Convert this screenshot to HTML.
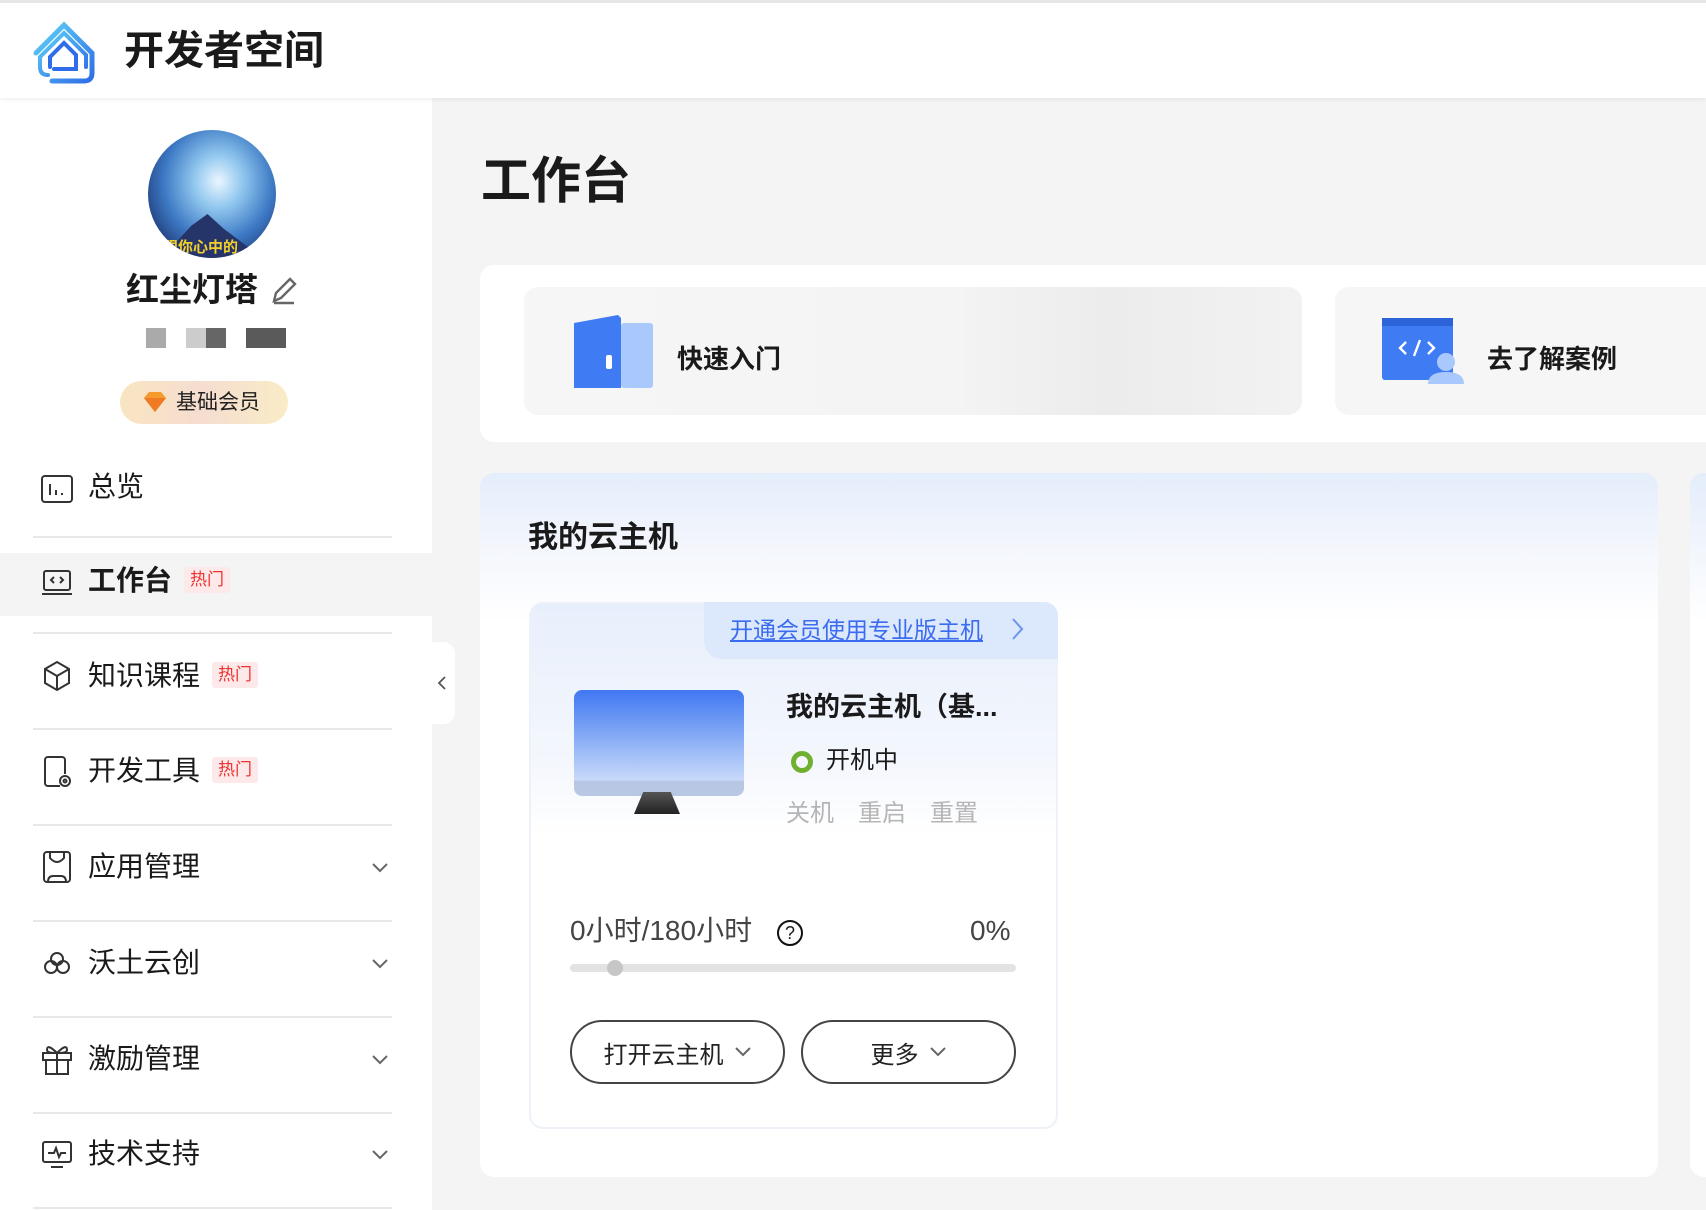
<!DOCTYPE html>
<html><head><meta charset="utf-8"><style>
*{margin:0;padding:0;box-sizing:border-box}
body{width:1706px;height:1210px;overflow:hidden;background:#f4f4f4;font-family:"Liberation Sans","Noto Sans CJK SC",sans-serif;color:#1a1a1a;position:relative}
.abs{position:absolute}
.hdr{left:0;top:0;width:1706px;height:98px;background:#fff;border-top:3px solid #e6e6e6;box-shadow:0 2px 4px rgba(0,0,0,.06);z-index:2}
.side{left:0;top:98px;width:432px;height:1112px;background:#fff}
.mi{position:absolute;left:88px;font-size:28px;line-height:40px;color:#1a1a1a}
.hot{display:inline-block;font-size:17px;line-height:26px;padding:0 6px;background:#fde9e9;color:#e33;border-radius:3px;vertical-align:middle;margin-left:12px;position:relative;top:-3px;font-weight:normal}
.ln{position:absolute;left:33px;width:359px;height:2px;background:#e8e8e8}
.ic{position:absolute;left:40px;width:34px;height:34px}
.chev{position:absolute;left:370px;width:20px;height:20px}
.btn{position:absolute;top:1020px;height:64px;border:2px solid #444;border-radius:32px;font-size:24px;display:flex;align-items:center;justify-content:center;gap:10px;color:#222}
</style></head><body>
<div class="abs hdr">
<svg class="abs" style="left:30px;top:14px" width="72" height="70" viewBox="0 0 72 70" fill="none">
<defs><linearGradient id="lg" x1="0" y1="0" x2="1" y2="1"><stop offset="0" stop-color="#5fd4f5"/><stop offset="1" stop-color="#2f6ee8"/></linearGradient></defs>
<path d="M6 36 L34 8 L62 36 L62 56 Q62 64 54 64 L22 64" stroke="url(#lg)" stroke-width="5" stroke-linecap="round"/>
<path d="M18 58 Q10 58 10 50 L10 40 L34 16 L56 38 L56 50" stroke="url(#lg)" stroke-width="4" stroke-linecap="round"/>
<path d="M20 50 L20 40 L34 26 L46 38 L46 52 L24 52" stroke="#2f6ee8" stroke-width="4" stroke-linecap="round"/>
</svg>
<div class="abs" style="left:124px;top:22px;font-size:40px;font-weight:bold;line-height:52px">开发者空间</div>
</div>
<div class="abs side"></div>
<div class="abs" style="left:148px;top:130px;width:128px;height:128px;border-radius:50%;background:radial-gradient(ellipse at 55% 40%,#eaf6ff 0%,#8fc6ee 25%,#3d79c4 55%,#1b2f6b 85%);overflow:hidden">
<div class="abs" style="left:10px;top:72px;width:110px;height:60px;background:#25356a;clip-path:polygon(0 100%,30% 40%,45% 20%,60% 45%,100% 100%)"></div>
<div class="abs" style="left:15px;top:106px;font-size:15px;font-weight:bold;color:#f2cf2a">跟你心中的</div>
</div>
<div class="abs" style="left:126px;top:268px;font-size:33px;font-weight:bold;line-height:44px">红尘灯塔</div>
<svg class="abs" style="left:270px;top:275px" width="28" height="30" viewBox="0 0 28 30"><path d="M4 26 L6 18 L20 4 L25 9 L11 23 Z M4 28 L24 28" stroke="#666" stroke-width="2.4" fill="none"/></svg>
<div class="abs" style="left:146px;top:328px;width:20px;height:20px;background:#aaa"></div>
<div class="abs" style="left:186px;top:328px;width:20px;height:20px;background:#ccc"></div>
<div class="abs" style="left:206px;top:328px;width:20px;height:20px;background:#666"></div>
<div class="abs" style="left:246px;top:328px;width:40px;height:20px;background:#5a5a5a"></div>
<div class="abs" style="left:120px;top:381px;width:168px;height:43px;border-radius:22px;background:linear-gradient(90deg,#f8e5c2,#f6ddd0,#f9ecc6)"></div>
<svg class="abs" style="left:142px;top:390px" width="26" height="24" viewBox="0 0 26 24"><path d="M2 8 L7 2 L19 2 L24 8 L13 22 Z" fill="#f59a2c"/><path d="M2 8 L24 8 L13 22Z" fill="#f07a22"/></svg>
<div class="abs" style="left:176px;top:388px;font-size:21px;line-height:30px;color:#222">基础会员</div>

<div class="abs" style="left:0;top:553px;width:432px;height:63px;background:#f4f4f4"></div>
<svg class="ic" style="top:472px" viewBox="0 0 34 34" fill="none" stroke="#333" stroke-width="2"><rect x="2" y="4" width="30" height="26" rx="3"/><path d="M10 12v11M16 18v5M22 21v2"/></svg>
<div class="mi" style="top:467px">总览</div>
<div class="ln" style="top:536px"></div>
<svg class="ic" style="top:566px" viewBox="0 0 34 34" fill="none" stroke="#333" stroke-width="2"><rect x="4" y="5" width="26" height="19" rx="2"/><path d="M2 28h30M14 11l-3 3 3 3M20 11l3 3-3 3"/></svg>
<div class="mi" style="top:561px;font-weight:bold">工作台<span class="hot">热门</span></div>
<div class="ln" style="top:632px"></div>
<svg class="ic" style="top:659px" viewBox="0 0 34 34" fill="none" stroke="#333" stroke-width="2"><path d="M17 3 L29 10 L29 24 L17 31 L5 24 L5 10Z M5 10 L17 17 L29 10 M17 17 V31"/></svg>
<div class="mi" style="top:656px">知识课程<span class="hot">热门</span></div>
<div class="ln" style="top:728px"></div>
<svg class="ic" style="top:755px" viewBox="0 0 34 34" fill="none" stroke="#333" stroke-width="2"><path d="M20 31H8a3 3 0 0 1-3-3V5a3 3 0 0 1 3-3h14a3 3 0 0 1 3 3v14"/><circle cx="25" cy="26" r="5"/><circle cx="25" cy="26" r="1.5"/></svg>
<div class="mi" style="top:751px">开发工具<span class="hot">热门</span></div>
<div class="ln" style="top:824px"></div>
<svg class="ic" style="top:850px" viewBox="0 0 34 34" fill="none" stroke="#333" stroke-width="2"><rect x="4" y="2" width="26" height="30" rx="3"/><path d="M10 2v6q7 8 14 0V2M8 32q0-6 5-6h8q5 0 5 6"/></svg>
<div class="mi" style="top:847px">应用管理</div>
<svg class="chev" style="top:857px" viewBox="0 0 20 20" fill="none" stroke="#666" stroke-width="2"><path d="M3 7l7 7 7-7"/></svg>
<div class="ln" style="top:920px"></div>
<svg class="ic" style="top:946px" viewBox="0 0 34 34" fill="none" stroke="#333" stroke-width="2"><circle cx="17" cy="13" r="6"/><circle cx="11" cy="21" r="6"/><circle cx="23" cy="21" r="6"/></svg>
<div class="mi" style="top:943px">沃土云创</div>
<svg class="chev" style="top:953px" viewBox="0 0 20 20" fill="none" stroke="#666" stroke-width="2"><path d="M3 7l7 7 7-7"/></svg>
<div class="ln" style="top:1016px"></div>
<svg class="ic" style="top:1042px" viewBox="0 0 34 34" fill="none" stroke="#333" stroke-width="2"><rect x="3" y="11" width="28" height="7"/><rect x="6" y="18" width="22" height="14"/><path d="M17 11v21M17 11q-10-10-10-3 0 3 10 3q10 0 10-3 0-7-10 3"/></svg>
<div class="mi" style="top:1039px">激励管理</div>
<svg class="chev" style="top:1049px" viewBox="0 0 20 20" fill="none" stroke="#666" stroke-width="2"><path d="M3 7l7 7 7-7"/></svg>
<div class="ln" style="top:1112px"></div>
<svg class="ic" style="top:1137px" viewBox="0 0 34 34" fill="none" stroke="#333" stroke-width="2"><rect x="3" y="5" width="28" height="20" rx="2"/><path d="M8 16h6l2-5 3 9 2-4h5M11 30h12"/></svg>
<div class="mi" style="top:1134px">技术支持</div>
<svg class="chev" style="top:1144px" viewBox="0 0 20 20" fill="none" stroke="#666" stroke-width="2"><path d="M3 7l7 7 7-7"/></svg>
<div class="ln" style="top:1207px"></div>

<div class="abs" style="left:432px;top:642px;width:23px;height:82px;background:#fff;border-radius:0 12px 12px 0"></div>
<svg class="abs" style="left:436px;top:675px" width="12" height="16" viewBox="0 0 12 16" fill="none" stroke="#555" stroke-width="1.8"><path d="M9 2L3 8l6 6"/></svg>

<div class="abs" style="left:481px;top:150px;font-size:50px;font-weight:bold;line-height:62px">工作台</div>
<div class="abs" style="left:480px;top:265px;width:1240px;height:177px;background:#fff;border-radius:14px"></div>
<div class="abs" style="left:524px;top:287px;width:778px;height:128px;border-radius:14px;background:linear-gradient(90deg,#f6f6f6 0%,#f4f4f4 55%,#ececec 75%,#f2f2f2 100%)"></div>
<svg class="abs" style="left:571px;top:315px" width="82" height="73" viewBox="0 0 82 73"><rect x="50" y="8" width="32" height="65" rx="3" fill="#a9c8fb"/><path d="M3 8 L47 0 L50 3 L50 73 L3 73 Z" fill="#3f7cf4"/><rect x="35" y="40" width="6" height="14" rx="2" fill="#fff"/></svg>
<div class="abs" style="left:677px;top:341px;font-size:26px;font-weight:bold;line-height:36px">快速入门</div>
<div class="abs" style="left:1335px;top:287px;width:400px;height:128px;border-radius:14px;background:#f6f6f6"></div>
<svg class="abs" style="left:1382px;top:318px" width="82" height="66" viewBox="0 0 82 66"><rect x="0" y="0" width="71" height="62" rx="3" fill="#3f7cf4"/><rect x="0" y="0" width="71" height="8" fill="#2c63d8"/><path d="M24 24l-6 6 6 6M46 24l6 6-6 6M38 22l-6 16" stroke="#fff" stroke-width="2.4" fill="none"/><circle cx="64" cy="44" r="9" fill="#a9c8fb"/><path d="M46 66q0-12 18-12q18 0 18 12z" fill="#a9c8fb"/></svg>
<div class="abs" style="left:1487px;top:341px;font-size:26px;font-weight:bold;line-height:36px">去了解案例</div>

<div class="abs" style="left:480px;top:473px;width:1178px;height:704px;border-radius:14px;background:linear-gradient(180deg,#e4edfb 0%,#f3f6fc 70px,#fff 150px,#fff 100%)"></div>
<div class="abs" style="left:1690px;top:473px;width:30px;height:704px;border-radius:14px 0 0 14px;background:linear-gradient(180deg,#e4edfb,#fff 150px)"></div>
<div class="abs" style="left:528px;top:518px;font-size:30px;font-weight:bold;line-height:40px">我的云主机</div>

<div class="abs" style="left:529px;top:602px;width:529px;height:527px;border:2px solid #edf1f8;border-radius:14px;background:linear-gradient(180deg,#e8effc 0%,#f4f7fd 160px,#fff 230px)"></div>
<div class="abs" style="left:704px;top:602px;width:354px;height:57px;border-radius:0 14px 0 18px;background:#dce8fb"></div>
<div class="abs" style="left:730px;top:613px;font-size:23px;line-height:34px;color:#3b6cf0;text-decoration:underline">开通会员使用专业版主机</div>
<svg class="abs" style="left:1010px;top:616px" width="16" height="26" viewBox="0 0 16 26" fill="none" stroke="#6b93f0" stroke-width="2"><path d="M3 3l9 10-9 10"/></svg>
<div class="abs" style="left:574px;top:690px;width:170px;height:106px;border-radius:8px;background:linear-gradient(180deg,#4077f2 0%,#8fb2f6 50%,#c9d9fa 85%,#b8c7e3 86%,#b8c7e3 100%)"></div>
<div class="abs" style="left:634px;top:792px;width:46px;height:22px;background:linear-gradient(#555,#222);clip-path:polygon(20% 0,80% 0,100% 100%,0 100%)"></div>
<div class="abs" style="left:786px;top:688px;font-size:27px;font-weight:bold;line-height:38px">我的云主机（基...</div>
<div class="abs" style="left:791px;top:751px;width:22px;height:22px;border:5px solid #6fb02f;border-radius:50%"></div>
<div class="abs" style="left:826px;top:744px;font-size:24px;line-height:34px">开机中</div>
<div class="abs" style="left:786px;top:797px;font-size:24px;line-height:34px;color:#b5b5b5;word-spacing:0">关机<span style="margin-left:24px">重启</span><span style="margin-left:24px">重置</span></div>
<div class="abs" style="left:570px;top:912px;font-size:28px;line-height:38px;color:#444">0小时/180小时</div>
<div class="abs" style="left:777px;top:920px;width:26px;height:26px;border:2px solid #111;border-radius:50%;font-size:18px;line-height:22px;text-align:center">?</div>
<div class="abs" style="left:970px;top:912px;font-size:28px;line-height:38px;color:#444">0%</div>
<div class="abs" style="left:570px;top:964px;width:446px;height:8px;border-radius:4px;background:#e3e3e3"></div>
<div class="abs" style="left:607px;top:960px;width:16px;height:16px;border-radius:50%;background:#c6c6c6"></div>
<div class="btn" style="left:570px;width:215px">打开云主机<svg width="18" height="12" viewBox="0 0 18 12" fill="none" stroke="#666" stroke-width="2"><path d="M2 2l7 7 7-7"/></svg></div>
<div class="btn" style="left:801px;width:215px">更多<svg width="18" height="12" viewBox="0 0 18 12" fill="none" stroke="#666" stroke-width="2"><path d="M2 2l7 7 7-7"/></svg></div>
</body></html>
